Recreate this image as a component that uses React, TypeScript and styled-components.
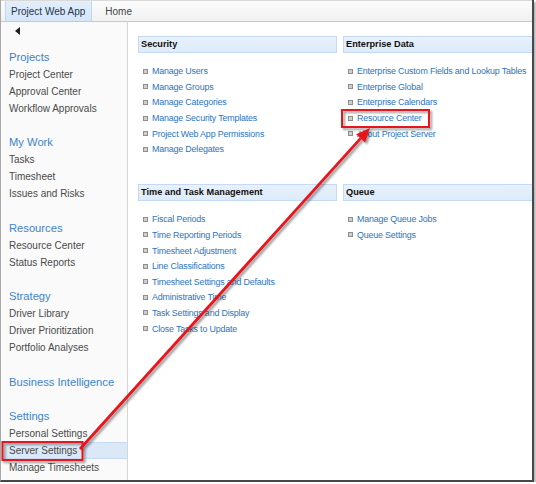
import React from 'react';
import styled, { createGlobalStyle } from 'styled-components';

type NavSection = {
  title: string;
  items: string[];
};

type LinkGroup = {
  title: string;
  links: string[];
};

const navSections: NavSection[] = [
  { title: 'Projects', items: ['Project Center', 'Approval Center', 'Workflow Approvals'] },
  { title: 'My Work', items: ['Tasks', 'Timesheet', 'Issues and Risks'] },
  { title: 'Resources', items: ['Resource Center', 'Status Reports'] },
  { title: 'Strategy', items: ['Driver Library', 'Driver Prioritization', 'Portfolio Analyses'] },
  { title: 'Business Intelligence', items: [] },
  { title: 'Settings', items: ['Personal Settings', 'Server Settings', 'Manage Timesheets'] },
];

const groups: LinkGroup[] = [
  {
    title: 'Security',
    links: [
      'Manage Users',
      'Manage Groups',
      'Manage Categories',
      'Manage Security Templates',
      'Project Web App Permissions',
      'Manage Delegates',
    ],
  },
  {
    title: 'Enterprise Data',
    links: [
      'Enterprise Custom Fields and Lookup Tables',
      'Enterprise Global',
      'Enterprise Calendars',
      'Resource Center',
      'About Project Server',
    ],
  },
  {
    title: 'Time and Task Management',
    links: [
      'Fiscal Periods',
      'Time Reporting Periods',
      'Timesheet Adjustment',
      'Line Classifications',
      'Timesheet Settings and Defaults',
      'Administrative Time',
      'Task Settings and Display',
      'Close Tasks to Update',
    ],
  },
  {
    title: 'Queue',
    links: ['Manage Queue Jobs', 'Queue Settings'],
  },
];

const Callouts: React.FC = () => {
  // arrow from the Server Settings box up to the Resource Center box
  const tail = { x: 79, y: 449 };
  const tip = { x: 369, y: 128 };
  const dx = tip.x - tail.x;
  const dy = tip.y - tail.y;
  const len = Math.sqrt(dx * dx + dy * dy);
  const ux = dx / len;
  const uy = dy / len;
  const bx = tip.x - ux * 14;
  const by = tip.y - uy * 14;
  const head = `${tip.x},${tip.y} ${bx - uy * 6},${by + ux * 6} ${bx + uy * 6},${by - ux * 6}`;

  return (
    <Overlay width="531" height="480" viewBox="0 0 531 480">
      <defs>
        <filter id="shade" x="-10%" y="-10%" width="130%" height="130%">
          <feDropShadow dx="2" dy="2" stdDeviation="1.2" floodColor="#000" floodOpacity="0.4" />
        </filter>
      </defs>
      <g filter="url(#shade)" fill="none" stroke="#e8131b" strokeWidth="2">
        <rect x="341" y="110" width="87" height="17" />
        <rect x="1.5" y="442" width="80" height="18" />
        <line x1={tail.x} y1={tail.y} x2={bx} y2={by} strokeWidth="2.8" />
        <polygon points={head} fill="#e8131b" stroke="none" />
      </g>
    </Overlay>
  );
};

const App: React.FC = () => {
  return (
    <>
      <GlobalStyle />
      <Frame>
        <TopBar>
          <Tab $active>Project Web App</Tab>
          <Tab>Home</Tab>
        </TopBar>
        <Body>
          <Nav>
            <CollapseRow>
              <CollapseArrow />
            </CollapseRow>
            {navSections.map((section) => (
              <Section key={section.title}>
                <NavHeading>{section.title}</NavHeading>
                {section.items.map((item) => (
                  <NavItem key={item} $selected={item === 'Server Settings'}>
                    {item}
                  </NavItem>
                ))}
              </Section>
            ))}
          </Nav>
          <Content>
            {groups.map((group) => (
              <Group key={group.title}>
                <GroupHeader>{group.title}</GroupHeader>
                <LinkList>
                  {group.links.map((link) => (
                    <LinkRow key={link}>
                      <Bullet />
                      <LinkText href="#">{link}</LinkText>
                    </LinkRow>
                  ))}
                </LinkList>
              </Group>
            ))}
          </Content>
        </Body>
        <Callouts />
      </Frame>
    </>
  );
};

export default App;

const GlobalStyle = createGlobalStyle`
  html, body {
    margin: 0;
    padding: 0;
    background: #ffffff;
  }
  body {
    font-family: "Liberation Sans", Arial, sans-serif;
  }
`;

const Frame = styled.div`
  position: relative;
  width: 531px;
  height: 480px;
  border-left: 1px solid #a8a8a8;
  border-right: 2px solid #484848;
  border-bottom: 2px solid #484848;
  box-shadow: 2px 2px 2px rgba(0, 0, 0, 0.3);
  overflow: hidden;
  display: flex;
  flex-direction: column;
  background: #ffffff;
`;

const TopBar = styled.div`
  display: flex;
  align-items: stretch;
  height: 20px;
  padding-left: 4px;
  border-top: 1px solid #d9d9d9;
  border-bottom: 1px solid #c9c9c9;
  background: linear-gradient(#fbfbfb, #f1f1f1);
`;

const Tab = styled.div<{ $active?: boolean }>`
  display: flex;
  align-items: center;
  padding: 0 ${({ $active }) => ($active ? '6px' : '0')} 0 ${({ $active }) => ($active ? '5px' : '12px')};
  font-size: 10px;
  color: ${({ $active }) => ($active ? '#22364d' : '#444444')};
  background: ${({ $active }) => ($active ? 'linear-gradient(#e3eefb, #d5e5f8)' : 'transparent')};
  border-left: 1px solid ${({ $active }) => ($active ? '#c2d7f1' : 'transparent')};
  border-right: 1px solid ${({ $active }) => ($active ? '#c2d7f1' : 'transparent')};
`;

const Body = styled.div`
  flex: 1;
  display: flex;
  min-height: 0;
`;

const Nav = styled.div`
  width: 126px;
  flex-shrink: 0;
  background: #fafafa;
  border-right: 1px solid #d6d6d6;
`;

const CollapseRow = styled.div`
  height: 18px;
  padding-left: 14px;
  display: flex;
  align-items: center;
  margin-bottom: 8.5px;
`;

const CollapseArrow = styled.span`
  width: 0;
  height: 0;
  border-top: 4px solid transparent;
  border-bottom: 4px solid transparent;
  border-right: 5px solid #1e1e1e;
`;

const Section = styled.div`
  margin-bottom: 17.5px;
`;

const NavHeading = styled.div`
  padding-left: 8px;
  height: 17px;
  line-height: 17px;
  font-size: 11.2px;
  color: #3b84cd;
  white-space: nowrap;
`;

const NavItem = styled.div<{ $selected?: boolean }>`
  padding-left: 8px;
  height: 17px;
  line-height: 17px;
  font-size: 10px;
  color: #4a4a4a;
  white-space: nowrap;
  background: ${({ $selected }) => ($selected ? '#dae8f8' : 'transparent')};
  box-shadow: ${({ $selected }) => ($selected ? 'inset 0 1px 0 #c6dbf3, inset 0 -1px 0 #c6dbf3' : 'none')};
`;

const Content = styled.div`
  flex: 1;
  display: grid;
  grid-template-columns: 199px 1fr;
  grid-template-rows: auto auto;
  align-content: start;
  column-gap: 6px;
  row-gap: 27px;
  padding: 14px 0 0 10px;
  margin-right: -3px;
`;

const Group = styled.div`
  display: flex;
  flex-direction: column;
  min-width: 0;
`;

const GroupHeader = styled.div`
  height: 15px;
  line-height: 15px;
  padding-left: 2px;
  border: 1px solid #c4d9f3;
  background: linear-gradient(#e8f1fc, #deebfa);
  font-size: 9.2px;
  font-weight: bold;
  color: #111111;
  white-space: nowrap;
`;

const LinkList = styled.div`
  margin-top: 10.5px;
  display: flex;
  flex-direction: column;
`;

const LinkRow = styled.div`
  display: flex;
  align-items: center;
  height: 15.6px;
  padding-left: 5px;
  gap: 4px;
`;

const Bullet = styled.span`
  width: 3px;
  height: 3px;
  flex-shrink: 0;
  background: #cfcfcf;
  border: 1px solid #8e8e8e;
`;

const LinkText = styled.a`
  font-size: 8.9px;
  letter-spacing: -0.17px;
  color: #2a74c2;
  text-decoration: none;
  white-space: nowrap;
`;

const Overlay = styled.svg`
  position: absolute;
  top: 0;
  left: 0;
  pointer-events: none;
`;
